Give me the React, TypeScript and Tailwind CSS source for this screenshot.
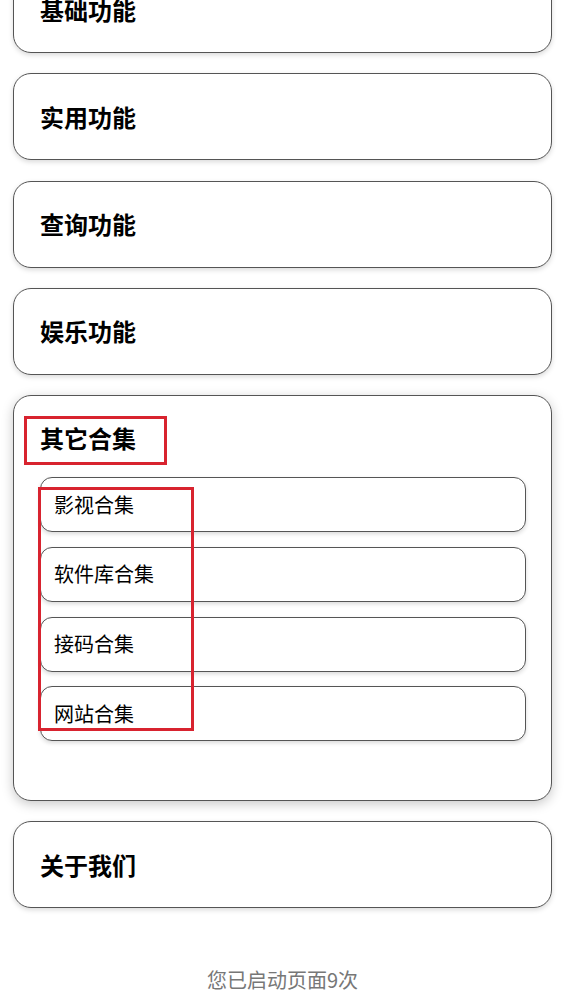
import React from 'react';

const font = { fontFamily: '"Noto Sans CJK SC", "Noto Sans", sans-serif' };

const sections = ['基础功能', '实用功能', '查询功能', '娱乐功能'];
const collections = ['影视合集', '软件库合集', '接码合集', '网站合集'];

function Card({ title }: { title: string }) {
  return (
    <div className="flex h-[87px] items-center rounded-[18px] border border-[#555] bg-white px-[26px] shadow-[0_2px_5px_rgba(0,0,0,0.15)]">
      <h3 className="text-[24px] font-bold leading-8 text-black">{title}</h3>
    </div>
  );
}

export default function App() {
  return (
    <div style={font} className="flex min-h-[1004px] flex-col bg-white px-[13px]">
      <div className="-mt-[34px] flex flex-col gap-[20.3px]">
        {sections.map((s) => (
          <Card key={s} title={s} />
        ))}

        <div className="relative rounded-[18px] border border-[#555] bg-white pb-[59px] pl-[26px] pr-[25px] pt-[26px] shadow-[0_3px_12px_rgba(0,0,0,0.22)]">
          <h3 className="text-[24px] font-bold leading-8 text-black">其它合集</h3>
          <ul className="mt-[23px] flex flex-col gap-[14.67px]">
            {collections.map((c) => (
              <li
                key={c}
                className="flex h-[55px] items-center rounded-[12px] border border-[#555] bg-white pl-[13px] text-[20px] leading-7 text-black shadow-[0_2px_4px_rgba(0,0,0,0.15)]"
              >
                {c}
              </li>
            ))}
          </ul>
          <div className="pointer-events-none absolute left-[10px] top-[20px] h-[49px] w-[143px] border-[3px] border-[#d8232f]" />
          <div className="pointer-events-none absolute left-[24px] top-[91px] h-[244px] w-[156px] border-[3px] border-[#d8232f]" />
        </div>

        <Card title="关于我们" />
      </div>

      <p className="mt-[58px] text-center text-[20px] leading-7 text-[#777]">您已启动页面9次</p>
    </div>
  );
}
